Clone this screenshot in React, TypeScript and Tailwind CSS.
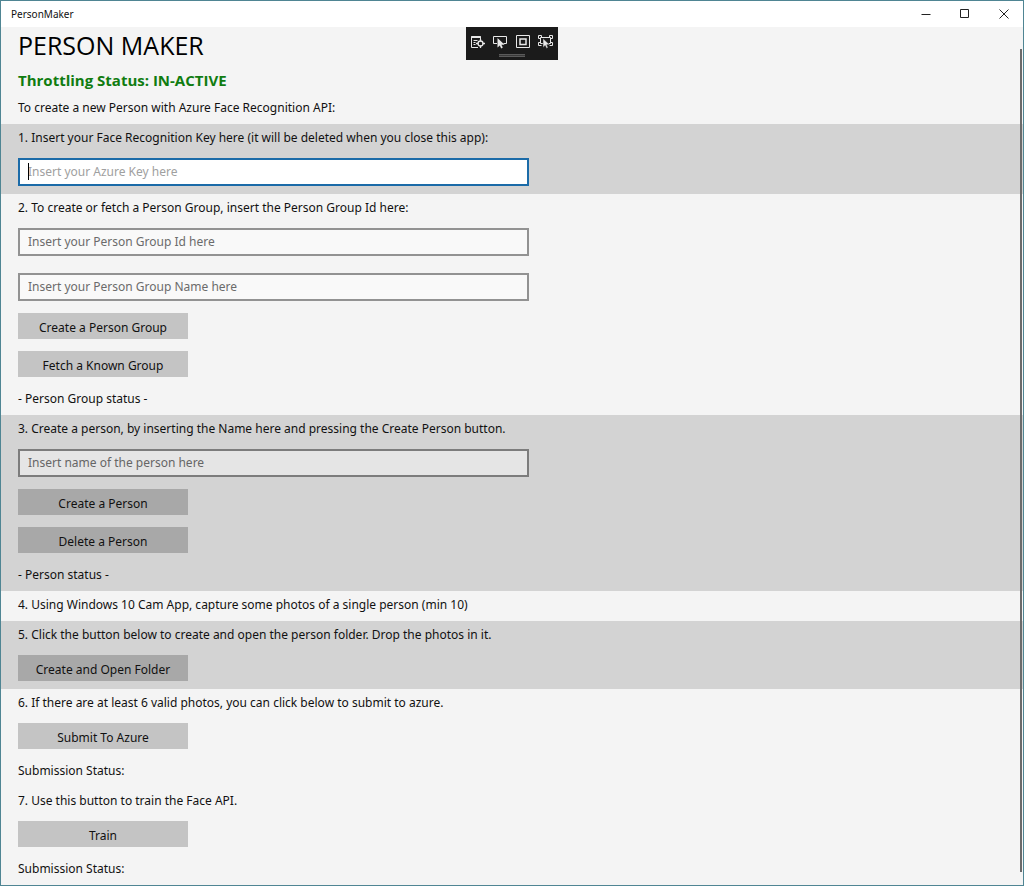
import type { ReactNode } from 'react';
import clsx from 'clsx';

function Section({ shaded, children }: { shaded?: boolean; children: ReactNode }) {
  return (
    <section className={clsx('flex flex-col items-start px-[17px] pt-1', shaded && 'bg-[#d3d3d3]')}>
      {children}
    </section>
  );
}

function Step({ htmlFor, children }: { htmlFor?: string; children: ReactNode }) {
  if (htmlFor) {
    return <label htmlFor={htmlFor} className="leading-5">{children}</label>;
  }
  return <p className="leading-5">{children}</p>;
}

function ActionButton({ dark, className, children }: { dark?: boolean; className: string; children: ReactNode }) {
  return (
    <button
      type="button"
      className={clsx('h-[26px] w-[170px] pt-1 leading-5', dark ? 'bg-[#a8a8a8]' : 'bg-[#c4c4c4]', className)}
    >
      {children}
    </button>
  );
}

function TitleBar() {
  return (
    <header className="flex h-[26px] items-center justify-between bg-white pl-2.5 text-[10px]">
      <span>PersonMaker</span>
      <div className="flex h-full text-[#222]">
        <button type="button" aria-label="Minimize" className="flex w-[39px] items-center justify-center">
          <svg width="10" height="10" viewBox="0 0 10 10" stroke="currentColor" fill="none">
            <path d="M0.5 5.5h9" />
          </svg>
        </button>
        <button type="button" aria-label="Maximize" className="flex w-[39px] items-center justify-center">
          <svg width="10" height="10" viewBox="0 0 10 10" stroke="currentColor" fill="none">
            <path d="M0.5 0.5h8v8h-8z" />
          </svg>
        </button>
        <button type="button" aria-label="Close" className="flex w-[39px] items-center justify-center">
          <svg width="10" height="10" viewBox="0 0 10 10" stroke="currentColor" fill="none">
            <path d="M0.5 0.5l9 9M9.5 0.5l-9 9" />
          </svg>
        </button>
      </div>
    </header>
  );
}

// Visual Studio in-app debug bar, floats over the page
function DebugToolbar() {
  return (
    <div className="absolute left-1/2 top-[26px] flex h-[33px] w-[92px] -translate-x-1/2 flex-col items-center bg-[#1b1b1b] text-[#e8e8e8]">
      <div className="flex h-[27px] items-center gap-2 pt-[3px]">
        <button type="button" aria-label="Go to Live Visual Tree">
          <svg className="block" width="14" height="14" viewBox="0 0 14 14" fill="none" stroke="currentColor">
            <path d="M7 12.5h-6.500v-11h9v3" />
            <path d="M0.5 2h9" strokeWidth="2" />
            <path d="M2.5 5.5h4M2.5 7.5h2M2.5 9.5h2" />
            <circle cx="9.5" cy="8.500" r="2.5" strokeWidth="1.3" />
            <path d="M9.5 4v2.500M9.5 10.500v2.500M5 8.500h2.500M11.500 8.500h2.500" strokeWidth="1.3" />
          </svg>
        </button>
        <button type="button" aria-label="Enable selection">
          <svg className="block" width="15" height="14" viewBox="0 0 15 14" fill="none" stroke="currentColor">
            <path d="M4 8.5h-3.500v-7h13v7h-3" />
            <path d="M4.500 3v9.500l2.300-2.100 1.400 3 1.600-.8-1.400-2.900h3.200z" fill="currentColor" stroke="none" />
          </svg>
        </button>
        <button type="button" aria-label="Display layout adorners">
          <svg className="block" width="14" height="14" viewBox="0 0 14 14" fill="none" stroke="currentColor">
            <path d="M0.500 0.500h13v12h-13z" />
            <path d="M4 4h6v5.500h-6z" strokeWidth="1.500" />
          </svg>
        </button>
        <button type="button" aria-label="Track focused element">
          <svg className="block" width="15" height="14" viewBox="0 0 15 14" fill="none" stroke="currentColor">
            <path d="M5 8.500h-2.500v-6h10v6h-2" />
            <path d="M0.500 3.500v-3h3M14.500 3.500v-3h-3M0.500 7.500v3h3M14.500 7.500v3h-3M0.500 3.500h2M12.500 3.500h2M0.500 7.500h2M12.500 7.500h2M3.500 0.500v2M11.500 0.500v2" />
            <path d="M5 3.500v9l2.200-2 1.300 2.900 1.600-.8-1.300-2.800h2.900z" fill="currentColor" stroke="#1b1b1b" strokeWidth="0.5" />
          </svg>
        </button>
      </div>
      <div className="h-[3px] w-[26px] border-y border-[#5a5a5a] bg-[#3a3a3a]" />
    </div>
  );
}

const inputClass = 'h-7 w-[511px] max-w-full border-2 px-2 pb-px leading-5 outline-none';

export default function App() {
  return (
    <div className="relative flex min-h-screen flex-col border border-[#4f8593] bg-[#f4f4f4] font-['Noto_Sans','Open_Sans',sans-serif] text-[12px] text-[#111]">
      <TitleBar />
      <DebugToolbar />

      <main>
        <div className="px-[17px] pb-1.5 pt-0.5">
          <h1 className="font-['Open_Sans',sans-serif] text-[25px] leading-8 text-black">PERSON MAKER</h1>
          <p className="mt-[7px] font-['Open_Sans',sans-serif] text-[15px] font-bold leading-6 text-[#107c10]">
            Throttling Status: IN-ACTIVE
          </p>
          <p className="mt-1.5 leading-5">To create a new Person with Azure Face Recognition API:</p>
        </div>

        <Section shaded>
          <Step htmlFor="face-key">
            1. Insert your Face Recognition Key here (it will be deleted when you close this app):
          </Step>
          <div className="relative mb-2 mt-2.5 flex max-w-full">
            <input
              id="face-key"
              type="text"
              placeholder="Insert your Azure Key here"
              className={clsx(inputClass, 'border-[#1b6ba8] bg-white placeholder:text-[#a0a0a0]')}
            />
            <span className="absolute left-2.5 top-[5px] h-[17px] w-px bg-black" />
          </div>
        </Section>

        <Section>
          <Step htmlFor="group-id">2. To create or fetch a Person Group, insert the Person Group Id here:</Step>
          <input
            id="group-id"
            type="text"
            placeholder="Insert your Person Group Id here"
            className={clsx(inputClass, 'mt-2.5 border-[#929292] bg-[#f9f9f9] placeholder:text-[#6b6b6b]')}
          />
          <input
            type="text"
            aria-label="Person Group Name"
            placeholder="Insert your Person Group Name here"
            className={clsx(inputClass, 'mt-[17px] border-[#929292] bg-[#f9f9f9] placeholder:text-[#6b6b6b]')}
          />
          <ActionButton className="mt-3">Create a Person Group</ActionButton>
          <ActionButton className="mt-3">Fetch a Known Group</ActionButton>
          <p className="mb-1.5 mt-3 leading-5">- Person Group status -</p>
        </Section>

        <Section shaded>
          <Step htmlFor="person-name">
            3. Create a person, by inserting the Name here and pressing the Create Person button.
          </Step>
          <input
            id="person-name"
            type="text"
            placeholder="Insert name of the person here"
            className={clsx(inputClass, 'mt-2.5 border-[#7c7c7c] bg-[#e5e5e5] placeholder:text-[#666]')}
          />
          <ActionButton dark className="mt-3">Create a Person</ActionButton>
          <ActionButton dark className="mt-3">Delete a Person</ActionButton>
          <p className="mb-1.5 mt-3 leading-5">- Person status -</p>
        </Section>

        <Section>
          <Step>4. Using Windows 10 Cam App, capture some photos of a single person (min 10)</Step>
          <div className="h-1.5" />
        </Section>

        <Section shaded>
          <Step>5. Click the button below to create and open the person folder. Drop the photos in it.</Step>
          <ActionButton dark className="mb-2 mt-2.5">Create and Open Folder</ActionButton>
        </Section>

        <Section>
          <Step>6. If there are at least 6 valid photos, you can click below to submit to azure.</Step>
          <ActionButton className="mt-2.5">Submit To Azure</ActionButton>
          <p className="mb-1.5 mt-3 leading-5">Submission Status:</p>
        </Section>

        <Section>
          <Step>7. Use this button to train the Face API.</Step>
          <ActionButton className="mt-2.5">Train</ActionButton>
          <p className="mb-1.5 mt-3 leading-5">Submission Status:</p>
        </Section>
      </main>

      {/* overlay scroll thumb */}
      <div className="absolute bottom-[13px] right-px top-12 w-0.5 bg-[#6b6b6b]" />
    </div>
  );
}
